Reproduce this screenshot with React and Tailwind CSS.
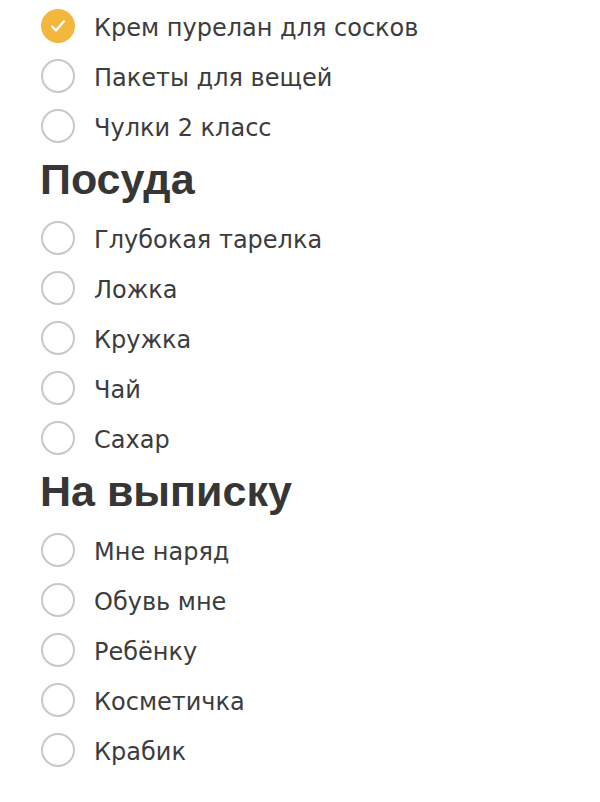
import React from 'react';

const sections = [
  {
    title: null,
    items: [
      { label: 'Крем пурелан для сосков', done: true },
      { label: 'Пакеты для вещей' },
      { label: 'Чулки 2 класс' },
    ],
  },
  {
    title: 'Посуда',
    items: [
      { label: 'Глубокая тарелка' },
      { label: 'Ложка' },
      { label: 'Кружка' },
      { label: 'Чай' },
      { label: 'Сахар' },
    ],
  },
  {
    title: 'На выписку',
    items: [
      { label: 'Мне наряд' },
      { label: 'Обувь мне' },
      { label: 'Ребёнку' },
      { label: 'Косметичка' },
      { label: 'Крабик' },
    ],
  },
];

const Check = ({ done }) =>
  done ? (
    <span className="w-[34px] h-[34px] rounded-full bg-[#f2b73c] flex items-center justify-center shrink-0">
      <svg width="20" height="20" viewBox="0 0 24 24" fill="none" stroke="#fff" strokeWidth="2.8" strokeLinecap="round" strokeLinejoin="round">
        <path d="M5 12.5l4.5 5L19 6.5" />
      </svg>
    </span>
  ) : (
    <span className="w-[34px] h-[34px] rounded-full border-2 border-[#c8c8c8] shrink-0" />
  );

const Row = ({ label, done }) => (
  <div className="h-[50px] flex items-center">
    <Check done={done} />
    <span className="ml-[19px] pt-[3px] text-[24px] text-[#3c3c3c] leading-none font-['DejaVu_Sans',sans-serif]">{label}</span>
  </div>
);

export default function App() {
  return (
    <div className="w-[600px] h-[802px] bg-white pl-[41px] pt-[1px] font-['Liberation_Sans',Arial,sans-serif]">
      {sections.map((s, i) => (
        <div key={i}>
          {s.title && (
            <h2 className="h-[62px] flex items-center pb-[6px] -ml-[1px] text-[43px] font-bold text-[#363636] leading-none">
              {s.title}
            </h2>
          )}
          {s.items.map((it) => (
            <Row key={it.label} {...it} />
          ))}
        </div>
      ))}
    </div>
  );
}
